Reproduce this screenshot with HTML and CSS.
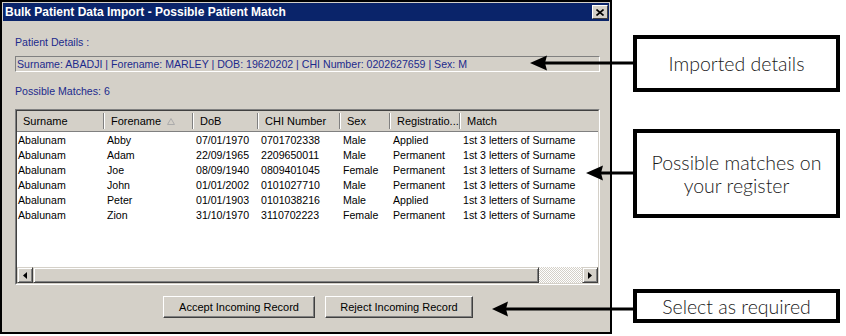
FILE: index.html
```html
<!DOCTYPE html>
<html>
<head>
    <title>Bulk Patient Data Import - Possible Patient Match</title>
    <link rel="stylesheet" href="styles.css">
</head>
<body>

    <div class="page">
        <div class="dialog">
            <div class="titlebar">
                <span class="title">Bulk Patient Data Import - Possible Patient Match</span>
                <span class="close-btn">
                    <svg width="8" height="7" viewBox="0 0 8 7"><path d="M0.5 0.5 L7.5 6.5 M7.5 0.5 L0.5 6.5" stroke="#000" stroke-width="1.6"/></svg>
                </span>
            </div>

            <div class="dialog-body">
                <div class="label details-label">Patient Details :</div>
                <div class="field">Surname: ABADJI | Forename: MARLEY | DOB: 19620202 | CHI Number: 0202627659 | Sex: M</div>

                <div class="label matches-label">Possible Matches: 6</div>

                <div class="listbox">
                    <div class="listbox-inner">
                        <div class="list-view">
                            <div class="list-head">
                                <div class="head-cell">Surname</div>
                                <div class="head-cell">Forename
                                    <svg class="sort-icon" width="8" height="7" viewBox="0 0 8 7"><path d="M4 0.5 L7.5 6.5 L0.5 6.5 Z" fill="none" stroke="#aaa" stroke-width="1"/></svg>
                                </div>
                                <div class="head-cell">DoB</div>
                                <div class="head-cell">CHI Number</div>
                                <div class="head-cell">Sex</div>
                                <div class="head-cell">Registratio...</div>
                                <div class="head-cell last">Match</div>
                            </div>
                            <div class="list-rows" id="listRows"></div>
                        </div>

                        <div class="hscroll">
                            <div class="scroll-btn">
                                <svg width="4" height="7" viewBox="0 0 4 7"><path d="M4 0 L0 3.5 L4 7 Z" fill="#000"/></svg>
                            </div>
                            <div class="scroll-thumb"></div>
                            <div class="scroll-track"></div>
                            <div class="scroll-btn">
                                <svg width="4" height="7" viewBox="0 0 4 7"><path d="M0 0 L4 3.5 L0 7 Z" fill="#000"/></svg>
                            </div>
                        </div>
                    </div>
                </div>

                <div class="button-row">
                    <button class="win-btn accept-btn">Accept Incoming Record</button>
                    <button class="win-btn reject-btn">Reject Incoming Record</button>
                </div>
            </div>
        </div>

        <div class="notes">
            <div class="note note-imported">Imported details</div>
            <div class="note note-matches">Possible matches on<br>your register</div>
            <div class="note note-select">Select as required</div>
        </div>

        <!-- callout arrows drawn over the dialog -->
        <svg class="arrows" width="846" height="336" viewBox="0 0 846 336">
            <line x1="544" y1="63" x2="636" y2="63" stroke="#000" stroke-width="3"/>
            <path d="M530 63 L547 55.5 L545 63 L547 70.5 Z" fill="#000"/>

            <line x1="600" y1="173" x2="636" y2="173" stroke="#000" stroke-width="3"/>
            <path d="M586 173 L603 165.5 L601 173 L603 180.5 Z" fill="#000"/>

            <line x1="505" y1="309" x2="636" y2="309" stroke="#000" stroke-width="3"/>
            <path d="M492 309 L508 301.5 L506 309 L508 316.5 Z" fill="#000"/>
        </svg>
    </div>

    <script>
        // Possible matches found on the register
        const matches = [
            ['Abalunam', 'Abby', '07/01/1970', '0701702338', 'Male', 'Applied'],
            ['Abalunam', 'Adam', '22/09/1965', '2209650011', 'Male', 'Permanent'],
            ['Abalunam', 'Joe', '08/09/1940', '0809401045', 'Female', 'Permanent'],
            ['Abalunam', 'John', '01/01/2002', '0101027710', 'Male', 'Permanent'],
            ['Abalunam', 'Peter', '01/01/1903', '0101038216', 'Male', 'Applied'],
            ['Abalunam', 'Zion', '31/10/1970', '3110702223', 'Female', 'Permanent']
        ];

        const listRows = document.getElementById('listRows');
        matches.forEach(m => {
            listRows.innerHTML += `
                <div class="list-row">
                    ${m.map(v => `<div class="cell">${v}</div>`).join('')}
                    <div class="cell">1st 3 letters of Surname</div>
                </div>
            `;
        });
    </script>

</body>
</html>
```

FILE: styles.css
```css
body {
    margin: 0;
    padding: 0;
    background: #fff;
    font-family: "Liberation Sans", Arial, sans-serif;
    font-size: 11px;
}
.page {
    position: relative;
    display: flex;
    width: 846px;
    height: 336px;
}
.dialog {
    box-sizing: border-box;
    width: 612px;
    height: 334px;
    border: 2px solid #000;
    padding: 1px;
    background: #d4d0c8;
    display: flex;
    flex-direction: column;
}
.titlebar {
    height: 18px;
    background: #0a246a;
    display: flex;
    align-items: center;
    justify-content: space-between;
}
.title {
    color: #fff;
    font-weight: bold;
    font-size: 12px;
    padding-left: 2px;
}
.close-btn {
    box-sizing: border-box;
    width: 16px;
    height: 14px;
    margin-right: 1px;
    background: #d4d0c8;
    border: 1px solid;
    border-color: #fff #404040 #404040 #fff;
    display: flex;
    align-items: center;
    justify-content: center;
}
.dialog-body {
    flex: 1;
    padding: 0 9px 0 12px;
}
.label {
    color: #1c2a8c;
    font-size: 10.6px;
    line-height: 14px;
}
.details-label {
    margin-top: 14px;
}
.field {
    box-sizing: border-box;
    height: 16px;
    margin-top: 7px;
    padding-left: 1px;
    font-size: 10.6px;
    line-height: 14px;
    color: #1c2a8c;
    border: 1px solid;
    border-color: #808080 #fff #fff #808080;
    white-space: nowrap;
    overflow: hidden;
}
.matches-label {
    margin-top: 12px;
}
.listbox {
    box-sizing: border-box;
    height: 176px;
    margin-top: 11px;
    border: 1px solid;
    border-color: #808080 #fff #fff #808080;
}
.listbox-inner {
    box-sizing: border-box;
    height: 100%;
    border: 1px solid;
    border-color: #404040 #d4d0c8 #d4d0c8 #404040;
    background: #fff;
    display: flex;
    flex-direction: column;
}
.list-view {
    flex: 1;
    overflow: hidden;
}
.list-head,
.list-row {
    display: grid;
    grid-template-columns: 88px 89px 65px 82px 50px 70px 1fr;
}
.list-head {
    height: 20px;
    background: #d4d0c8;
    border-bottom: 1px solid #808080;
}
.head-cell {
    display: flex;
    align-items: center;
    padding-left: 6px;
    color: #000;
    white-space: nowrap;
    background:
        linear-gradient(#808080, #808080) right 1px top 2px / 1px 16px no-repeat,
        linear-gradient(#fff, #fff) right 0 top 2px / 1px 16px no-repeat;
}
.head-cell.last {
    background: none;
}
.sort-icon {
    margin-left: 6px;
}
.list-rows {
    padding-top: 1px;
}
.list-row {
    height: 15px;
    line-height: 15px;
    font-size: 10.6px;
    color: #000;
}
.cell {
    padding-left: 2px;
    white-space: nowrap;
    overflow: hidden;
}
.cell:first-child {
    padding-left: 1px;
}
.hscroll {
    height: 16px;
    display: flex;
}
.scroll-btn,
.scroll-thumb {
    box-sizing: border-box;
    height: 16px;
    background: #d4d0c8;
    border: 1px solid;
    border-color: #d4d0c8 #404040 #404040 #d4d0c8;
    box-shadow: inset 1px 1px #fff, inset -1px -1px #808080;
}
.scroll-btn {
    width: 16px;
    display: flex;
    align-items: center;
    justify-content: center;
}
.scroll-thumb {
    width: 506px;
}
.scroll-track {
    flex: 1;
    background: repeating-conic-gradient(#fff 0 25%, #d4d0c8 0 50%) 0 0 / 2px 2px;
}
.button-row {
    display: flex;
    gap: 10px;
    margin-top: 11px;
    padding-left: 148px;
}
.win-btn {
    box-sizing: border-box;
    height: 22px;
    padding: 0;
    background: #d4d0c8;
    border: 1px solid;
    border-color: #fff #404040 #404040 #fff;
    box-shadow: inset -1px -1px #808080;
    font-family: "Liberation Sans", Arial, sans-serif;
    font-size: 11px;
    color: #000;
}
.accept-btn {
    width: 152px;
}
.reject-btn {
    width: 148px;
}
.notes {
    margin-left: 21px;
    width: 207px;
    display: flex;
    flex-direction: column;
}
.note {
    box-sizing: border-box;
    border: 4px solid #000;
    background: #fff;
    display: flex;
    align-items: center;
    justify-content: center;
    text-align: center;
    font-family: Lato, "Noto Sans", sans-serif;
    font-size: 19.5px;
    font-weight: 300;
    line-height: 23px;
    color: #1a1a1a;
}
.note-imported {
    margin-top: 35px;
    height: 57px;
}
.note-matches {
    margin-top: 37px;
    height: 89px;
}
.note-select {
    margin-top: 71px;
    height: 34px;
}
.arrows {
    position: absolute;
    top: 0;
    left: 0;
    pointer-events: none;
}
```
